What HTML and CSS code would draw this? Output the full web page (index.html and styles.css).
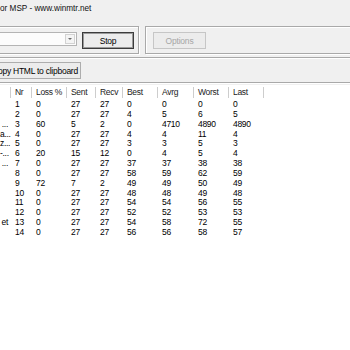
FILE: index.html
```html
<!DOCTYPE html>
<html lang="en">
<head>
  <meta charset="UTF-8" />
  <title>WinMTR</title>
  <link rel="stylesheet" href="styles.css">
</head>
<body>
  <div class="window">
    <div class="titlebar">or MSP - www.winmtr.net</div>

    <div class="toolbar">
      <div class="group group-host">
        <div class="combo"><span class="combo-btn"><i class="arrow"></i></span></div>
        <button class="btn btn-default">Stop</button>
      </div>
      <div class="group group-opts">
        <button class="btn" disabled>Options</button>
      </div>
    </div>

    <div class="group group-copy">
      <button class="btn btn-copy">Copy HTML to clipboard</button>
    </div>

    <div class="list">
      <div class="row head">
        <span></span><span>Nr</span><span>Loss %</span><span>Sent</span><span>Recv</span><span>Best</span><span>Avrg</span><span>Worst</span><span>Last</span><span class="fill"></span>
      </div>
      <div class="row"><span></span><span>1</span><span>0</span><span>27</span><span>27</span><span>0</span><span>0</span><span>0</span><span>0</span></div>
      <div class="row"><span></span><span>2</span><span>0</span><span>27</span><span>27</span><span>4</span><span>5</span><span>6</span><span>5</span></div>
      <div class="row"><span>...</span><span>3</span><span>60</span><span>5</span><span>2</span><span>0</span><span>4710</span><span>4890</span><span>4890</span></div>
      <div class="row"><span>a...</span><span>4</span><span>0</span><span>27</span><span>27</span><span>4</span><span>4</span><span>11</span><span>4</span></div>
      <div class="row"><span>z...</span><span>5</span><span>0</span><span>27</span><span>27</span><span>3</span><span>3</span><span>5</span><span>3</span></div>
      <div class="row"><span>-...</span><span>6</span><span>20</span><span>15</span><span>12</span><span>0</span><span>4</span><span>5</span><span>4</span></div>
      <div class="row"><span>...</span><span>7</span><span>0</span><span>27</span><span>27</span><span>37</span><span>37</span><span>38</span><span>38</span></div>
      <div class="row"><span></span><span>8</span><span>0</span><span>27</span><span>27</span><span>58</span><span>59</span><span>62</span><span>59</span></div>
      <div class="row"><span></span><span>9</span><span>72</span><span>7</span><span>2</span><span>49</span><span>49</span><span>50</span><span>49</span></div>
      <div class="row"><span></span><span>10</span><span>0</span><span>27</span><span>27</span><span>48</span><span>48</span><span>49</span><span>48</span></div>
      <div class="row"><span></span><span>11</span><span>0</span><span>27</span><span>27</span><span>54</span><span>54</span><span>56</span><span>55</span></div>
      <div class="row"><span></span><span>12</span><span>0</span><span>27</span><span>27</span><span>52</span><span>52</span><span>53</span><span>53</span></div>
      <div class="row"><span>et</span><span>13</span><span>0</span><span>27</span><span>27</span><span>54</span><span>58</span><span>72</span><span>55</span></div>
      <div class="row"><span></span><span>14</span><span>0</span><span>27</span><span>27</span><span>56</span><span>56</span><span>58</span><span>57</span></div>
    </div>
  </div>
</body>
</html>
```

FILE: styles.css
```css
body {
  margin: 0;
  background: #f0f0f0;
  color: #000;
  font-family: "Liberation Sans", Arial, sans-serif;
  font-size: 8.5px;
}

.window {
  width: 350px;
  height: 350px;
  display: flex;
  flex-direction: column;
  overflow: hidden;
}

.titlebar {
  height: 26px;
  box-sizing: border-box;
  padding-top: 3px;
  font-size: 8.2px;
  line-height: 12px;
  color: #111;
  white-space: nowrap;
}

/* etched group boxes */
.group {
  box-sizing: border-box;
  border: 1px solid #a9a9a9;
  box-shadow: inset 1px 1px 0 #fff, 1px 1px 0 #fff;
}

.toolbar {
  display: flex;
  gap: 6px;
  height: 28px;
}

.group-host {
  width: 151px;
  margin-left: -12px;
  padding-top: 5px;
  display: flex;
  align-items: flex-start;
}

.group-opts {
  flex: 1;
  margin-right: -12px;
  padding: 5px 0 0 7px;
}

.combo {
  width: 88px;
  height: 14px;
  box-sizing: border-box;
  border: 1px solid #b4b4b4;
  background: #fcfcfc;
  display: flex;
  justify-content: flex-end;
  padding: 1px;
}

.combo-btn {
  width: 10px;
  box-sizing: border-box;
  border: 1px solid #d2d2d2;
  background: #f4f4f4;
  display: flex;
  align-items: center;
  justify-content: center;
}

.arrow {
  width: 0;
  height: 0;
  border-left: 2px solid transparent;
  border-right: 2px solid transparent;
  border-top: 2px solid #6a6a6a;
}

.btn {
  height: 17px;
  box-sizing: border-box;
  padding: 0;
  border: 1px solid #adadad;
  background: #ececec;
  font-family: inherit;
  font-size: 8.5px;
  letter-spacing: -0.2px;
  color: #000;
}

.btn-default {
  width: 52px;
  margin-left: 5px;
  border: 1px solid #3c3c3c;
  box-shadow: inset 0 0 0 1px #9a9a9a;
}

.group-opts .btn {
  width: 53px;
  border-color: #c6c6c6;
  color: #a6a6a6;
}

.group-copy {
  height: 26px;
  margin: 3px -12px 0;
  padding: 4px 0 0 0;
}

.btn-copy {
  width: 92px;
  letter-spacing: -0.25px;
}

.list {
  flex: 1;
  margin-top: 2px;
  background: #fff;
}

.row {
  display: grid;
  grid-template-columns: 11px 21px 35px 29px 27px 35px 36px 35px 35px 1fr;
  height: 9.85px;
  line-height: 9.85px;
  letter-spacing: -0.3px;
  white-space: nowrap;
}

.row span {
  padding-left: 4px;
  overflow: hidden;
}

.row span:first-child {
  padding: 0 3px 0 0;
  text-align: right;
}

.row.head {
  height: 15px;
  line-height: 15px;
  color: #222;
}

.row.head span {
  background: linear-gradient(#cdcdcd, #cdcdcd) right 2px / 1px 11px no-repeat;
}

.row.head span.fill {
  background: none;
}
```
